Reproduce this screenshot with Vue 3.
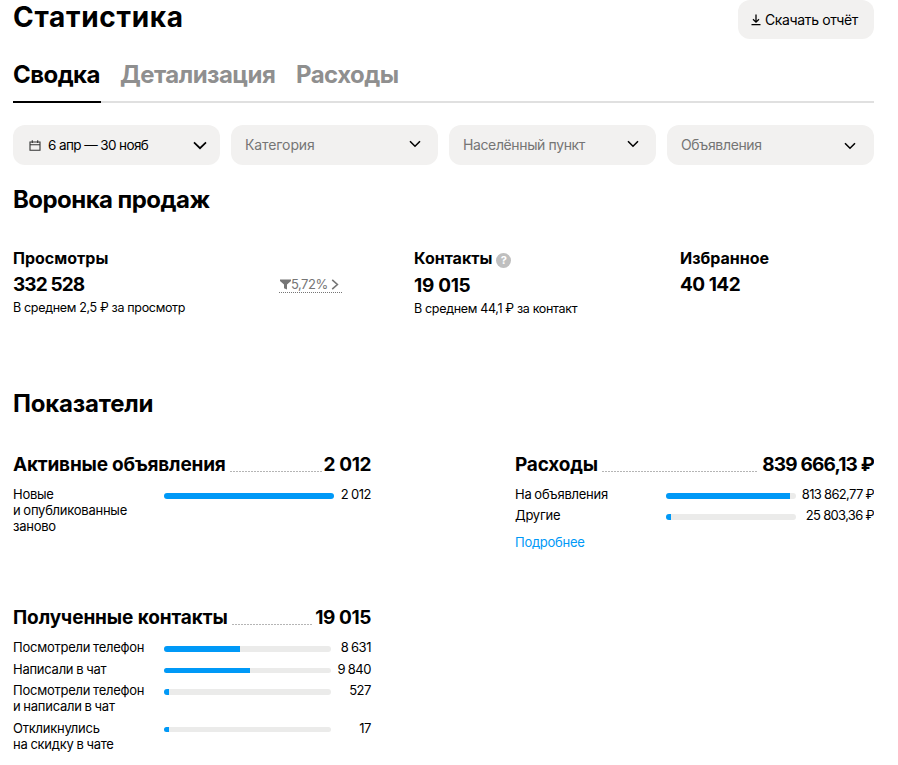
<script setup>
const tabs = ['Сводка', 'Детализация', 'Расходы']
const filters = [
  { key: 'category', label: 'Категория' },
  { key: 'city', label: 'Населённый пункт' },
  { key: 'ads', label: 'Объявления' },
]
const cards = [
  {
    key: 'active', title: 'Активные объявления', total: '2 012',
    rows: [{ label: ['Новые', 'и опубликованные', 'заново'], value: '2 012', share: 100 }],
  },
  {
    key: 'costs', title: 'Расходы', total: '839 666,13 ₽', link: 'Подробнее',
    rows: [
      { label: ['На объявления'], value: '813 862,77 ₽', share: 95.5 },
      { label: ['Другие'], value: '25 803,36 ₽', share: 3.8 },
    ],
  },
  {
    key: 'received', title: 'Полученные контакты', total: '19 015',
    rows: [
      { label: ['Посмотрели телефон'], value: '8 631', share: 45.5 },
      { label: ['Написали в чат'], value: '9 840', share: 51.7 },
      { label: ['Посмотрели телефон', 'и написали в чат'], value: '527', share: 3 },
      { label: ['Откликнулись', 'на скидку в чате'], value: '17', share: 3 },
    ],
  },
]
</script>

<template>
  <main class="page">
    <header class="header">
      <h1>Статистика</h1>
      <button class="download">
        <svg width="10" height="12" viewBox="0 0 10 12" fill="none" stroke="#000" stroke-width="1.3">
          <path d="M5 0.5V8M2 5.2L5 8.1L8 5.2M0.5 10.7H9.5" />
        </svg>
        <span>Скачать отчёт</span>
      </button>
    </header>

    <nav class="tabs">
      <a v-for="(tab, i) in tabs" :key="tab" class="tab" :class="[`tab-${i}`, { active: i === 0 }]"><span>{{ tab }}</span></a>
    </nav>

    <div class="filters">
      <div class="filter period">
        <svg class="calendar" width="12" height="11" viewBox="0 0 12 11" fill="none" stroke="#333" stroke-width="1.1">
          <path d="M1 2H11V10.3H1ZM1 4.7H11M3.3 0.3V3M8.7 0.3V3" />
        </svg>
        <span>6 апр — 30 нояб</span>
        <svg class="chevron" width="14" height="9" viewBox="0 0 14 9" fill="none" stroke="#000" stroke-width="1.7">
          <path d="M1 1.3L7 7.2L13 1.3" />
        </svg>
      </div>
      <div v-for="f in filters" :key="f.key" class="filter" :class="f.key">
        <span>{{ f.label }}</span>
        <svg class="chevron" width="12" height="8" viewBox="0 0 12 8" fill="none" stroke="#000" stroke-width="1.6">
          <path d="M1 1.3L6 6.2L11 1.3" />
        </svg>
      </div>
    </div>

    <h2 class="funnel-title">Воронка продаж</h2>
    <section class="funnel">
      <div class="metric views">
        <h3>Просмотры</h3>
        <strong>332 528</strong>
        <p>В среднем 2,5 ₽ за просмотр</p>
      </div>
      <a class="conversion">
        <svg width="11" height="11" viewBox="0 0 11 11" fill="#757575"><path d="M0 0.5H11V2L7 5.5V10.5L4 9.2V5.5L0 2Z" /></svg>
        <span>5,72%</span>
        <svg class="next" width="8" height="11" viewBox="0 0 8 11" fill="none" stroke="#757575" stroke-width="1.6"><path d="M1.2 0.8L6.4 5.5L1.2 10.2" /></svg>
      </a>
      <div class="metric contacts">
        <h3><span>Контакты</span><i class="help">?</i></h3>
        <strong>19 015</strong>
        <p>В среднем 44,1 ₽ за контакт</p>
      </div>
      <div class="metric favorites">
        <h3>Избранное</h3>
        <strong>40 142</strong>
      </div>
    </section>

    <h2 class="indicators-title">Показатели</h2>
    <section class="cards">
      <article v-for="card in cards" :key="card.key" class="card" :class="card.key">
        <div class="card-head">
          <h4>{{ card.title }}</h4>
          <svg class="leader" height="1"><line x1="0" y1="0.5" x2="100%" y2="0.5" stroke="#b5b5b5" stroke-dasharray="2 1" /></svg>
          <b>{{ card.total }}</b>
        </div>
        <div v-for="(row, i) in card.rows" :key="i" class="row">
          <div class="row-label"><div v-for="line in row.label" :key="line">{{ line }}</div></div>
          <div class="bar"><div class="fill" :style="{ width: row.share + '%' }"></div></div>
          <div class="row-value">{{ row.value }}</div>
        </div>
        <a v-if="card.link" class="more">{{ card.link }}</a>
      </article>
    </section>
  </main>
</template>

<style>
body { background: #fff; }
</style>

<style scoped>
.page {
  width: 861px;
  height: 765px;
  margin-left: 13px;
  overflow: hidden;
  color: #000;
  font-family: Inter, "Noto Sans", sans-serif;
  font-size: 13px;
}
h1, h2, h3, h4, p { margin: 0; white-space: nowrap; }
.header { display: flex; justify-content: space-between; height: 39px; }
h1 { font-size: 28px; line-height: 34px; font-weight: 700; letter-spacing: 0.7px; }
.download {
  display: flex; align-items: center; gap: 4px;
  width: 136px; height: 39px; padding: 0 0 0 13px;
  border: 0; border-radius: 12px; background: #f2f1f0; color: #000;
  font: 400 14px/20px Inter, "Noto Sans", sans-serif; letter-spacing: -0.37px; white-space: nowrap;
}
.tabs { display: flex; gap: 20px; height: 40px; margin-top: 22px; border-bottom: 2px solid #e0e0e0; }
.tab { height: 40px; border-bottom: 2px solid transparent; font-size: 24px; line-height: 28px; font-weight: 700; letter-spacing: -0.56px; color: #8f8f8f; white-space: nowrap; }
.tab.active { color: #000; border-color: #000; }
.tab-0 { width: 88px; }
.tab-1 { width: 156px; margin-left: -1px; }
.filters { display: grid; grid-template-columns: repeat(4, 207px); gap: 11px; margin-top: 22px; }
.filter {
  display: flex; align-items: center; justify-content: space-between; box-sizing: border-box;
  height: 40px; padding: 0 17px 2px 14px; border-radius: 12px; background: #f2f1f0;
  color: #757575; font-size: 14px; letter-spacing: -0.38px; white-space: nowrap;
}
.category { letter-spacing: -0.1px; }
.ads { padding-right: 18px; letter-spacing: -0.35px; }
.ads .chevron { margin-top: 4px; }
.filter.period { padding: 0 13px 0 16px; color: #000; font-size: 13.5px; letter-spacing: -0.6px; }
.period .calendar { margin-right: 7px; }
.period .chevron { margin-left: auto; }
h2 { font-size: 24px; line-height: 30px; font-weight: 700; }
.funnel-title { margin-top: 20px; letter-spacing: -0.55px; }
.funnel { display: grid; grid-template-columns: 266px 135px 266px 1fr; height: 74px; margin-top: 32px; }
.metric h3 { display: flex; align-items: center; height: 22px; font-size: 16px; font-weight: 700; }
.metric strong { display: block; height: 24px; margin-top: 3px; font-size: 19px; line-height: 25px; font-weight: 700; letter-spacing: -0.5px; }
.metric.views strong { letter-spacing: -0.9px; }
.metric.contacts strong { letter-spacing: -0.3px; }
.metric p { margin-top: 4px; font-size: 12.5px; line-height: 16px; letter-spacing: -0.33px; }
.contacts strong { margin-top: 4px; }
.help {
  width: 15px; height: 15px; margin: 5px 0 0 4px; border-radius: 50%; background: #bfbfbf; color: #fff;
  font-size: 11px; line-height: 15px; font-style: normal; text-align: center;
}
.conversion {
  display: flex; align-items: center; box-sizing: border-box; width: 63px; height: 17px; margin-top: 29px;
  padding: 0 3px 0 1px; border-bottom: 1px dotted #757575; color: #757575; font-size: 13px; letter-spacing: -0.5px;
}
.conversion .next { margin-left: auto; }
.indicators-title { margin-top: 68px; letter-spacing: -0.2px; }
.cards { display: grid; grid-template-columns: 358px 359px; column-gap: 144px; grid-template-rows: 153px 150px; margin-top: 32px; }
.card-head { display: flex; align-items: center; height: 28px; margin-bottom: 7px; }
h4, .card-head b { font-size: 19px; font-weight: 700; line-height: 28px; letter-spacing: -0.2px; white-space: nowrap; }
.card-head b { letter-spacing: -0.4px; }
.received h4 { letter-spacing: -0.1px; }
.costs .card-head b { letter-spacing: -0.82px; }
.leader { flex: 1; width: 0; margin: 12px 2px 0 4px; }
.costs .leader { margin-right: 4px; }
.row { display: flex; align-items: flex-start; margin-bottom: 5.5px; line-height: 16px; letter-spacing: -0.25px; word-spacing: -0.5px; white-space: nowrap; }
.costs .row { margin-bottom: 5px; }
.row-label { width: 151px; flex: none; }
.bar { width: 167px; height: 5.5px; margin-top: 7px; border-radius: 3px; overflow: hidden; background: #ebebea; flex: none; }
.active .bar { width: 170px; }
.costs .bar { width: 130px; }
.fill { height: 100%; background: #0099f7; }
.row-value { margin-left: auto; letter-spacing: -0.45px; }
.costs .row-value { letter-spacing: -0.68px; word-spacing: 0; }
.more { display: block; margin-top: 11px; line-height: 16px; letter-spacing: -0.25px; color: #0099f7; }
</style>
